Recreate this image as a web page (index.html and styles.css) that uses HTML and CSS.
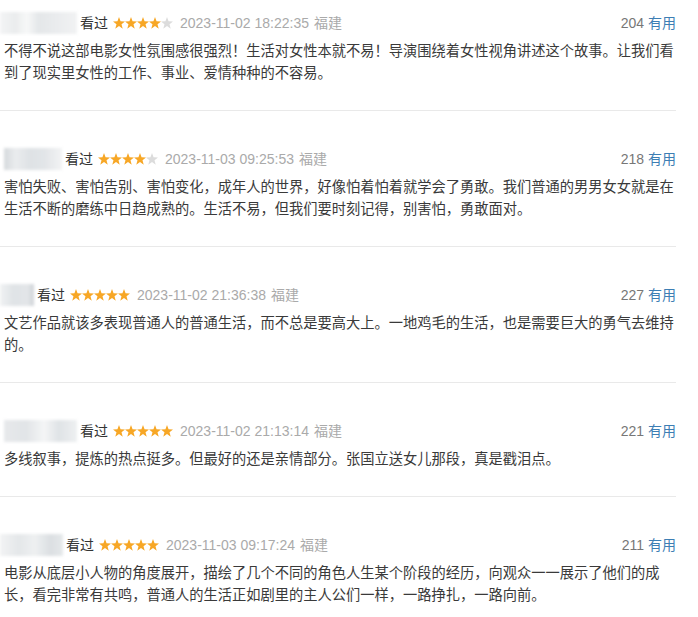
FILE: index.html
```html
<!DOCTYPE html>
<html lang="zh-CN">
<head>
<meta charset="utf-8">
<title>短评</title>
<link rel="stylesheet" href="styles.css">
</head>
<body>
<div class="list">
  <div class="item">
    <div class="head">
      <span class="user u1"></span>
      <span class="watched">看过</span>
      <span class="stars"><i class="s on"></i><i class="s on"></i><i class="s on"></i><i class="s on"></i><i class="s"></i></span>
      <span class="time">2023-11-02 18:22:35</span>
      <span class="loc">福建</span>
      <span class="votes"><span class="num">204</span> <span class="useful">有用</span></span>
    </div>
    <p class="text">不得不说这部电影女性氛围感很强烈！生活对女性本就不易！导演围绕着女性视角讲述这个故事。让我们看到了现实里女性的工作、事业、爱情种种的不容易。</p>
  </div>
  <div class="item">
    <div class="head">
      <span class="user u2"></span>
      <span class="watched">看过</span>
      <span class="stars"><i class="s on"></i><i class="s on"></i><i class="s on"></i><i class="s on"></i><i class="s"></i></span>
      <span class="time">2023-11-03 09:25:53</span>
      <span class="loc">福建</span>
      <span class="votes"><span class="num">218</span> <span class="useful">有用</span></span>
    </div>
    <p class="text">害怕失败、害怕告别、害怕变化，成年人的世界，好像怕着怕着就学会了勇敢。我们普通的男男女女就是在生活不断的磨练中日趋成熟的。生活不易，但我们要时刻记得，别害怕，勇敢面对。</p>
  </div>
  <div class="item">
    <div class="head">
      <span class="user u3"></span>
      <span class="watched">看过</span>
      <span class="stars"><i class="s on"></i><i class="s on"></i><i class="s on"></i><i class="s on"></i><i class="s on"></i></span>
      <span class="time">2023-11-02 21:36:38</span>
      <span class="loc">福建</span>
      <span class="votes"><span class="num">227</span> <span class="useful">有用</span></span>
    </div>
    <p class="text">文艺作品就该多表现普通人的普通生活，而不总是要高大上。一地鸡毛的生活，也是需要巨大的勇气去维持的。</p>
  </div>
  <div class="item">
    <div class="head">
      <span class="user u4"></span>
      <span class="watched">看过</span>
      <span class="stars"><i class="s on"></i><i class="s on"></i><i class="s on"></i><i class="s on"></i><i class="s on"></i></span>
      <span class="time">2023-11-02 21:13:14</span>
      <span class="loc">福建</span>
      <span class="votes"><span class="num">221</span> <span class="useful">有用</span></span>
    </div>
    <p class="text">多线叙事，提炼的热点挺多。但最好的还是亲情部分。张国立送女儿那段，真是戳泪点。</p>
  </div>
  <div class="item">
    <div class="head">
      <span class="user u5"></span>
      <span class="watched">看过</span>
      <span class="stars"><i class="s on"></i><i class="s on"></i><i class="s on"></i><i class="s on"></i><i class="s on"></i></span>
      <span class="time">2023-11-03 09:17:24</span>
      <span class="loc">福建</span>
      <span class="votes"><span class="num">211</span> <span class="useful">有用</span></span>
    </div>
    <p class="text">电影从底层小人物的角度展开，描绘了几个不同的角色人生某个阶段的经历，向观众一一展示了他们的成长，看完非常有共鸣，普通人的生活正如剧里的主人公们一样，一路挣扎，一路向前。</p>
  </div>
</div>
</body>
</html>
```

FILE: styles.css
```css
html, body {
  margin: 0;
  padding: 0;
  background: #ffffff;
}

body {
  font-family: "Liberation Sans", "Noto Sans CJK SC", sans-serif;
  color: #333333;
  overflow: hidden;
}

.list {
  width: 676px;
}

.item {
  padding: 37px 0 26px 0;
  border-bottom: 1px solid #e9e9e9;
}

.item:first-child {
  padding-top: 12px;
}

.head {
  display: flex;
  align-items: center;
  height: 22px;
  font-size: 14px;
  line-height: 22px;
}

.user {
  display: block;
  height: 22px;
  margin-right: 3px;
  filter: blur(1.5px);
}

.u1 {
  width: 77px;
  background: linear-gradient(90deg, #f3f4f5 0%, #eaeced 20%, #f7f8f8 35%, #e4e7e9 50%, #e9ebed 70%, #f1f2f3 100%);
}

.u2 {
  width: 58px;
  margin-left: 4px;
  background: linear-gradient(90deg, #d5d9dc 0%, #eaecee 20%, #dee2e5 45%, #e2e5e8 70%, #f2f3f4 100%);
}

.u3 {
  width: 34px;
  background: linear-gradient(90deg, #f0f2f3 0%, #dfe3e6 40%, #e3e6e9 80%, #cfd3d7 100%);
}

.u4 {
  width: 73px;
  margin-left: 4px;
  background: linear-gradient(90deg, #e7e9eb 0%, #e1e4e7 30%, #f4f5f6 55%, #dfe3e6 75%, #eef0f1 100%);
}

.u5 {
  width: 63px;
  background: linear-gradient(90deg, #f2f3f4 0%, #e4e7e9 30%, #eef0f1 55%, #dbdfe2 80%, #e5e8ea 100%);
}

.watched {
  color: #333333;
}

.stars {
  display: flex;
  margin-left: 5px;
  margin-right: 7px;
}

.s {
  display: block;
  width: 12px;
  height: 12px;
  background: #dcdcdc;
  clip-path: polygon(50% 0%, 63% 36%, 100% 37%, 71% 60%, 81% 98%, 50% 76%, 19% 98%, 29% 60%, 0% 37%, 37% 36%);
}

.s.on {
  background: #f7a726;
}

.time {
  color: #aaaaaa;
  margin-right: 5px;
}

.loc {
  color: #aaaaaa;
}

.votes {
  margin-left: auto;
  white-space: pre;
}

.num {
  color: #777777;
}

.useful {
  color: #3d7eb4;
}

.text {
  margin: 6px 0 0 4px;
  font-size: 14.25px;
  line-height: 22px;
  color: #3a3a3a;
}
```
